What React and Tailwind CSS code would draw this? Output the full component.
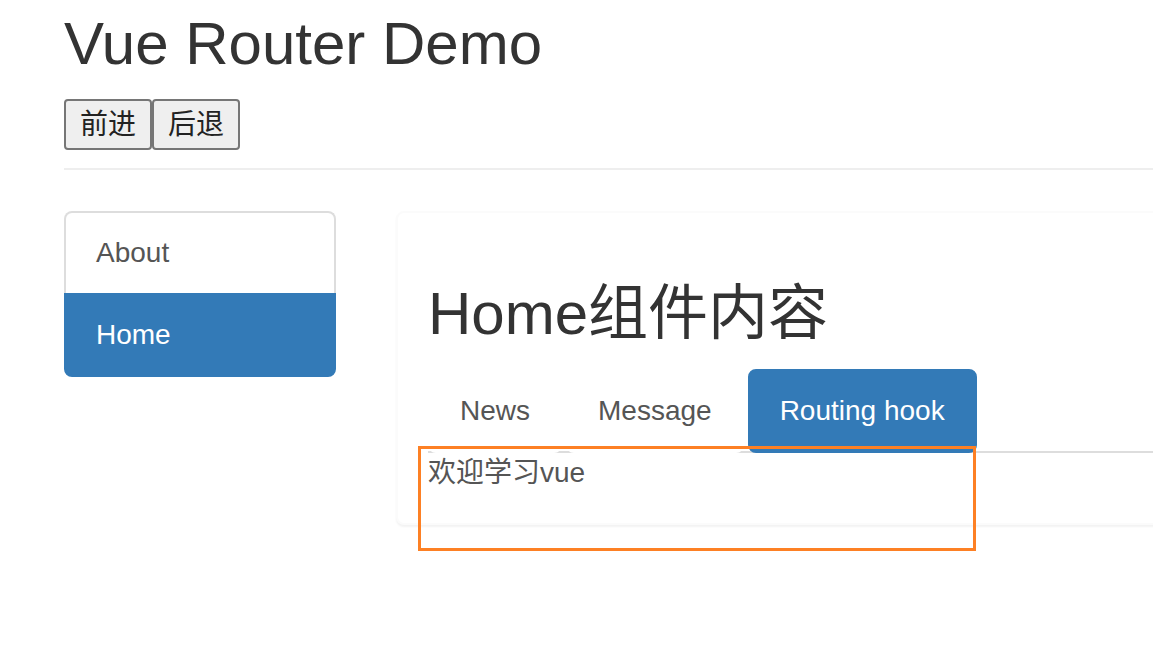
import React from "react";

const tabs = ["News", "Message", "Routing hook"];

export default function App() {
  return (
    <div className="relative min-h-screen w-full overflow-hidden bg-white font-['Liberation_Sans','Noto_Sans_CJK_SC',sans-serif] text-[#333]">
      {/* Page header */}
      <div className="ml-[64px] border-b-2 border-[#eee] pt-[11px] pb-[18px]">
        <h2 className="mb-[22px] text-[60px] leading-[66px] font-normal">Vue Router Demo</h2>
        <div className="flex">
          <button className="flex h-[51px] w-[88px] items-center justify-center rounded-[4px] border-2 border-[#767676] bg-[#efefef] text-[28px] leading-[40px] text-[#222]">
            前进
          </button>
          <button className="flex h-[51px] w-[88px] items-center justify-center rounded-[4px] border-2 border-[#767676] bg-[#efefef] text-[28px] leading-[40px] text-[#222]">
            后退
          </button>
        </div>
      </div>

      {/* Main row */}
      <div className="ml-[64px] mt-[41px] flex gap-[60px]">
        {/* Side nav */}
        <div className="flex w-[272px] shrink-0 flex-col text-[28px] leading-[40px]">
          <div className="rounded-t-lg border-2 border-b-0 border-[#ddd] px-[30px] py-[20px] text-[#555]">
            About
          </div>
          <div className="rounded-b-lg border-2 border-[#337ab7] bg-[#337ab7] px-[30px] py-[20px] text-white">
            Home
          </div>
        </div>

        {/* Panel */}
        <div className="w-[820px] shrink-0 rounded-lg border-2 border-[#fbfbfb] bg-white shadow-[0_2px_2px_rgba(0,0,0,0.05)]">
          <div className="px-[30px] pt-[30px] pb-[30px]">
            <h2 className="mt-[38px] mb-[22px] text-[60px] leading-[66px] font-normal">Home组件内容</h2>
            <ul className="flex border-b-2 border-[#ddd] text-[28px] leading-[40px]">
              {tabs.map((t, i) => (
                <li key={t} className="mr-[4px] -mb-[2px]">
                  <span
                    className={
                      i === 2
                        ? "block rounded-lg border-2 border-[#337ab7] bg-[#337ab7] px-[30px] py-[20px] text-white"
                        : "block rounded-lg border-2 border-white bg-white px-[30px] py-[20px] text-[#555]"
                    }
                  >
                    {t}
                  </span>
                </li>
              ))}
            </ul>
            <p className="text-[28px] leading-[40px] text-[#555]">欢迎学习vue</p>
          </div>
        </div>
      </div>

      {/* Highlight annotation */}
      <div className="absolute left-[418px] top-[446px] h-[105px] w-[558px] border-[3px] border-[#fd8024]"></div>
    </div>
  );
}
